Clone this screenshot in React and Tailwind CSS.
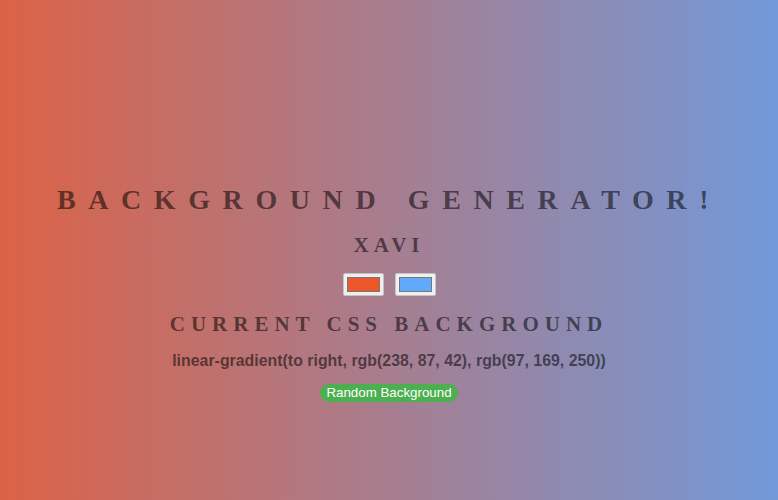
export default function App() {
  return (
    <div className="min-h-[500px] w-full bg-[linear-gradient(to_right,#dc6246,#7299d9)] flex flex-col items-center pt-[180px] text-center">
      <h1 className="font-['Liberation_Serif',serif] font-bold text-[28px] leading-[40px] tracking-[12.6px] text-black/55 uppercase">
        Background Generator!
      </h1>
      <h3 className="mt-[10px] font-['Liberation_Serif',serif] font-bold text-[21px] leading-[30px] tracking-[5px] text-black/55">
        XAVI
      </h3>
      <div className="mt-[13px] flex gap-[11px]">
        <div className="w-[41px] h-[23px] bg-[#efefef] border border-[#c4c4c4] rounded-[2px] p-[3px]">
          <div className="w-full h-full bg-[#ee572a] border border-[#777]" />
        </div>
        <div className="w-[41px] h-[23px] bg-[#efefef] border border-[#c4c4c4] rounded-[2px] p-[3px]">
          <div className="w-full h-full bg-[#61a9fa] border border-[#777]" />
        </div>
      </div>
      <h3 className="mt-[13px] font-['Liberation_Serif',serif] font-bold text-[21px] leading-[30px] tracking-[6px] text-black/55">
        CURRENT CSS BACKGROUND
      </h3>
      <p className="mt-[12px] font-['Liberation_Sans',sans-serif] font-bold text-[15.9px] leading-[20px] text-black/55">
        linear-gradient(to right, rgb(238, 87, 42), rgb(97, 169, 250))
      </p>
      <button className="mt-[13px] bg-[#4caf50] text-white font-['Liberation_Sans',sans-serif] text-[13.33px] leading-[18px] px-[6px] rounded-full">
        Random Background
      </button>
    </div>
  );
}
